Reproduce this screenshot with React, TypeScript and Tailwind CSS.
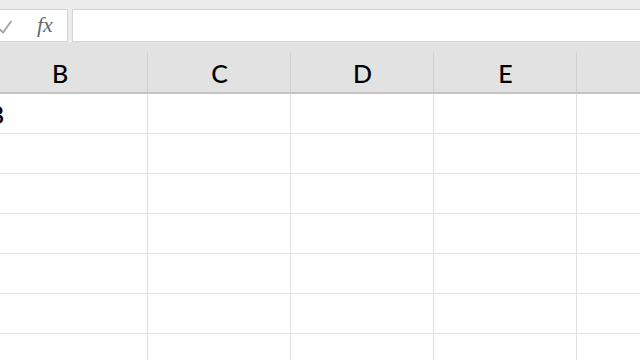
import React from "react";

const cols = ["B", "C", "D", "E", ""];
const rows = [0, 1, 2, 3, 4, 5, 6];

export default function App() {
  return (
    <div className="w-[640px] h-[360px] overflow-hidden bg-white relative" style={{ fontFamily: "Lato, 'Open Sans', sans-serif" }}>
      {/* formula bar */}
      <div className="h-[42px] bg-[#ececec] flex items-start pt-[9px] border-b border-[#f7f7f7]">
        <div className="w-[68px] h-[33px] bg-white border border-[#d4d4d4] border-l-0 flex items-center relative">
          <svg className="absolute left-0 top-[10px]" width="14" height="14" viewBox="0 0 14 14">
            <polyline points="-3,7 3,12.5 11,1.5" fill="none" stroke="#a6a6a6" strokeWidth="2" strokeLinecap="round" strokeLinejoin="round" />
          </svg>
          <span className="absolute left-[37px] top-[4px] text-[#5f6a6a] text-[22px] italic leading-none" style={{ fontFamily: "'Liberation Serif', serif" }}>fx</span>
        </div>
        <div className="ml-[4px] flex-1 h-[33px] bg-white border border-[#d4d4d4] border-r-0" />
      </div>
      {/* header row */}
      <div className="h-[52px] bg-[#e2e2e2] flex ml-[-28px] border-b-2 border-[#c3c3c3]">
        {cols.map((c, i) => (
          <div key={i} className={`${i === 0 ? "w-[176px]" : "w-[143px]"} shrink-0 flex items-end relative`}>
            <div className="flex-1 h-[40px] flex items-center justify-center text-[25px] text-black leading-none pt-[3px] font-medium">{c}</div>
            <div className="absolute right-0 bottom-0 h-[40px] w-px bg-[#cfcfcf]" />
          </div>
        ))}
      </div>
      {/* grid */}
      <div className="ml-[-28px]">
        {rows.map((r) => (
          <div key={r} className="flex h-[40px] border-b border-[#e1e1e1]">
            {cols.map((c, i) => (
              <div key={i} className={`${i === 0 ? "w-[176px]" : "w-[143px]"} shrink-0 border-r border-[#e1e1e1] flex items-center relative`}>
                {r === 0 && i === 0 ? (
                  <span className="absolute left-[16px] top-[8px] text-[25px] text-black leading-none font-medium">B</span>
                ) : null}
              </div>
            ))}
          </div>
        ))}
      </div>
    </div>
  );
}
